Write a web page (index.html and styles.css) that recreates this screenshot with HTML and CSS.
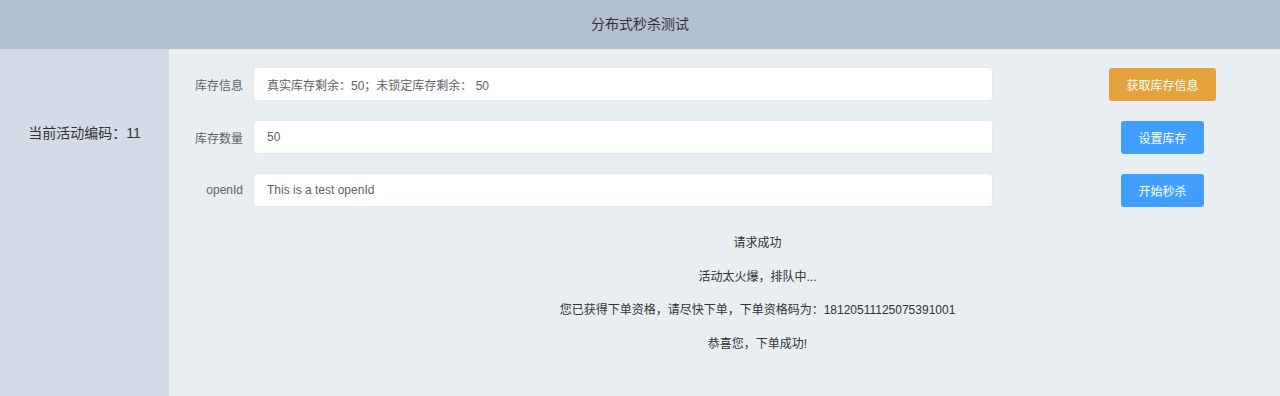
FILE: index.html
```html
<!DOCTYPE html>
<html lang="zh-CN">
<head>
    <meta charset="UTF-8">
    <meta name="viewport" content="width=device-width, initial-scale=1.0">
    <title>分布式秒杀测试</title>
    <link rel="stylesheet" href="styles.css">
</head>
<body>
    <div class="layout">
        <header class="header">分布式秒杀测试</header>
        <div class="body">
            <aside class="aside">当前活动编码：11</aside>
            <main class="main">
                <div class="form-grid">
                    <label class="form-label" for="stockInfo">库存信息</label>
                    <input class="form-input" id="stockInfo" type="text" value="真实库存剩余：50；未锁定库存剩余： 50">
                    <div class="form-action"><button class="btn btn-warning">获取库存信息</button></div>

                    <label class="form-label" for="stockNum">库存数量</label>
                    <input class="form-input" id="stockNum" type="text" value="50">
                    <div class="form-action"><button class="btn btn-primary">设置库存</button></div>

                    <label class="form-label" for="openId">openId</label>
                    <input class="form-input" id="openId" type="text" value="This is a test openId">
                    <div class="form-action"><button class="btn btn-primary">开始秒杀</button></div>

                    <div class="messages">
                        <p>请求成功</p>
                        <p>活动太火爆，排队中...</p>
                        <p>您已获得下单资格，请尽快下单，下单资格码为：18120511125075391001</p>
                        <p>恭喜您，下单成功!</p>
                    </div>
                </div>
            </main>
        </div>
    </div>
</body>
</html>
```

FILE: styles.css
```css
:root {
    --header-bg: #b3c0d1;
    --aside-bg: #d3dce6;
    --main-bg: #e9eef3;
    --text-dark: #333333;
    --text-regular: #606266;
    --border-color: #dcdfe6;
    --primary: #409eff;
    --warning: #e6a23c;
}

html, body {
    margin: 0;
    padding: 0;
    height: 100%;
}

body {
    font-family: "Liberation Sans", "Noto Sans CJK SC", sans-serif;
    color: var(--text-dark);
    background-color: var(--main-bg);
    overflow: hidden;
}

.layout {
    display: flex;
    flex-direction: column;
    height: 100vh;
}

.header {
    height: 49px;
    line-height: 49px;
    background-color: var(--header-bg);
    text-align: center;
    font-size: 14px;
    color: var(--text-dark);
}

.body {
    display: flex;
    flex: 1;
}

.aside {
    width: 169px;
    background-color: var(--aside-bg);
    text-align: center;
    line-height: 168px;
    font-size: 14px;
    color: var(--text-dark);
}

.main {
    flex: 1;
    background-color: var(--main-bg);
    padding: 18px 18px 0 20px;
}

.form-grid {
    display: grid;
    grid-template-columns: 54px 740px 1fr;
    column-gap: 10px;
    row-gap: 19px;
    align-items: center;
}

.form-label {
    text-align: right;
    font-size: 12px;
    color: var(--text-regular);
}

.form-input {
    height: 34px;
    box-sizing: border-box;
    border: 1px solid #e4e7ed;
    border-radius: 4px;
    background-color: #fff;
    padding: 0 13px;
    font-family: inherit;
    font-size: 12px;
    color: var(--text-regular);
    outline: none;
}

.form-action {
    text-align: center;
    padding-left: 60px;
}

.btn {
    height: 33px;
    padding: 0 17px;
    border: none;
    border-radius: 3px;
    color: #fff;
    font-family: inherit;
    font-size: 12px;
    cursor: pointer;
}

.btn-primary {
    background-color: var(--primary);
}

.btn-warning {
    background-color: var(--warning);
}

.messages {
    grid-column: 2 / 4;
    text-align: center;
    margin-top: 1px;
}

.messages p {
    margin: 0;
    line-height: 33.6px;
    font-size: 12px;
    color: var(--text-dark);
}
```
